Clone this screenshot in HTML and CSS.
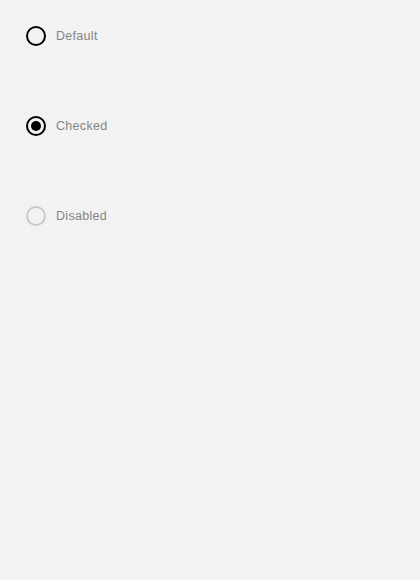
FILE: index.html
```html
<!DOCTYPE html>
<html>
<head>
<meta charset="utf-8">
<link rel="stylesheet" href="styles.css">
</head>
<body>
<div class="list">
  <label class="radio">
    <span class="circle"></span>
    <span class="label">Default</span>
  </label>
  <label class="radio">
    <span class="circle checked"></span>
    <span class="label">Checked</span>
  </label>
  <label class="radio disabled">
    <span class="circle"></span>
    <span class="label">Disabled</span>
  </label>
</div>
</body>
</html>
```
FILE: styles.css
```css
html, body {
  margin: 0;
  padding: 0;
  background: #f2f2f2;
  height: 100%;
}
.list {
  display: flex;
  flex-direction: column;
  gap: 50px;
  padding: 16px 26px;
}
.radio {
  display: flex;
  align-items: center;
  gap: 10px;
  height: 40px;
}
.circle {
  box-sizing: border-box;
  width: 20px;
  height: 20px;
  border: 2px solid #000;
  border-radius: 50%;
  display: flex;
  align-items: center;
  justify-content: center;
}
.circle.checked::after {
  content: "";
  width: 10px;
  height: 10px;
  border-radius: 50%;
  background: #000;
}
.disabled .circle {
  border-color: #c8c8c8;
}
.label {
  font-family: "Liberation Sans", Arial, sans-serif;
  font-size: 12.5px;
  letter-spacing: 0.3px;
  color: #858585;
  margin-top: -1px;
}
```
